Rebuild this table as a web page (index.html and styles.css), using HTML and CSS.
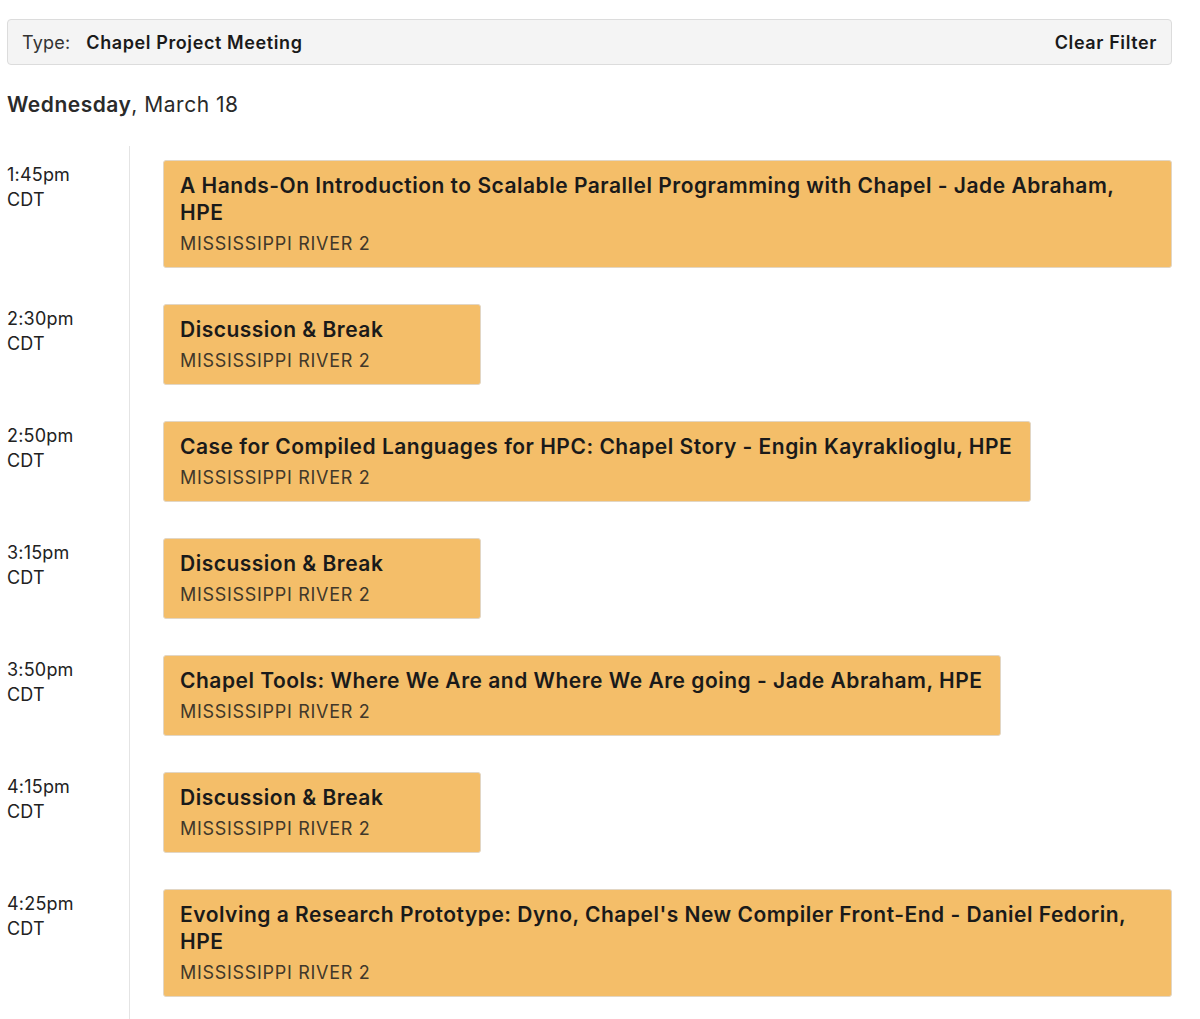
FILE: index.html
```html
<!DOCTYPE html>
<html>
<head>
<meta charset="utf-8">
<link rel="stylesheet" href="styles.css">
</head>
<body>
<div class="page">
  <div class="filter">
    <div class="filter-left"><span class="filter-label">Type:</span><span class="filter-value">Chapel Project Meeting</span></div>
    <div class="filter-clear">Clear Filter</div>
  </div>
  <h2 class="day"><strong>Wednesday</strong>, March 18</h2>
  <div class="schedule">
    <div class="row">
      <div class="time">1:45pm<br>CDT</div>
      <div class="slot"><div class="card"><div class="title">A Hands-On Introduction to Scalable Parallel Programming with Chapel - Jade Abraham, HPE</div><div class="loc">MISSISSIPPI RIVER 2</div></div></div>
    </div>
    <div class="row">
      <div class="time">2:30pm<br>CDT</div>
      <div class="slot"><div class="card"><div class="title">Discussion &amp; Break</div><div class="loc">MISSISSIPPI RIVER 2</div></div></div>
    </div>
    <div class="row">
      <div class="time">2:50pm<br>CDT</div>
      <div class="slot"><div class="card"><div class="title">Case for Compiled Languages for HPC: Chapel Story - Engin Kayraklioglu, HPE</div><div class="loc">MISSISSIPPI RIVER 2</div></div></div>
    </div>
    <div class="row">
      <div class="time">3:15pm<br>CDT</div>
      <div class="slot"><div class="card"><div class="title">Discussion &amp; Break</div><div class="loc">MISSISSIPPI RIVER 2</div></div></div>
    </div>
    <div class="row">
      <div class="time">3:50pm<br>CDT</div>
      <div class="slot"><div class="card"><div class="title">Chapel Tools: Where We Are and Where We Are going - Jade Abraham, HPE</div><div class="loc">MISSISSIPPI RIVER 2</div></div></div>
    </div>
    <div class="row">
      <div class="time">4:15pm<br>CDT</div>
      <div class="slot"><div class="card"><div class="title">Discussion &amp; Break</div><div class="loc">MISSISSIPPI RIVER 2</div></div></div>
    </div>
    <div class="row">
      <div class="time">4:25pm<br>CDT</div>
      <div class="slot"><div class="card"><div class="title">Evolving a Research Prototype: Dyno, Chapel's New Compiler Front-End - Daniel Fedorin, HPE</div><div class="loc">MISSISSIPPI RIVER 2</div></div></div>
    </div>
  </div>
</div>
</body>
</html>
```
FILE: styles.css
```css
html, body {
  margin: 0;
  padding: 0;
  background: #fff;
}
body {
  font-family: Inter, "Noto Sans", sans-serif;
  color: #1c1c1c;
}
.page {
  padding: 19px 28px 0 7px;
}
.filter {
  display: flex;
  justify-content: space-between;
  align-items: center;
  height: 44px;
  padding: 0 14px 0 14px;
  background: #f4f4f4;
  border: 1px solid #dcdcdc;
  border-radius: 4px;
  font-size: 18px;
}
.filter-label {
  color: #333;
  margin-right: 16px;
  letter-spacing: 0.2px;
}
.filter-value {
  font-weight: 600;
  color: #1a1a1a;
  letter-spacing: 0.6px;
}
.filter-clear {
  font-weight: 600;
  color: #1a1a1a;
  letter-spacing: 0.6px;
}
.day {
  margin: 27px 0 0 0;
  font-size: 21px;
  font-weight: 400;
  line-height: 26px;
  color: #2a2a2a;
  letter-spacing: 0.5px;
}
.day strong {
  font-weight: 600;
}
.schedule {
  margin-top: 28px;
}
.row {
  display: flex;
}
.time {
  width: 122px;
  flex: none;
  font-size: 18px;
  line-height: 25px;
  padding-top: 16px;
  color: #222;
  letter-spacing: 0.2px;
}
.slot {
  flex: 1;
  border-left: 1px solid #e4e4e4;
  padding: 14px 0 22px 33px;
  min-width: 0;
}
.card {
  display: inline-block;
  box-sizing: border-box;
  min-width: 318px;
  max-width: 100%;
  vertical-align: top;
  background: #f4be69;
  border: 1px solid #e2d6c4;
  border-radius: 3px;
  padding: 11px 18px 11px 16px;
}
.title {
  font-size: 21px;
  font-weight: 600;
  line-height: 27px;
  color: #1a1a1a;
  letter-spacing: 0.5px;
}
.loc {
  margin-top: 6px;
  font-size: 18px;
  line-height: 24px;
  color: #41382a;
  letter-spacing: 0.7px;
}
```
